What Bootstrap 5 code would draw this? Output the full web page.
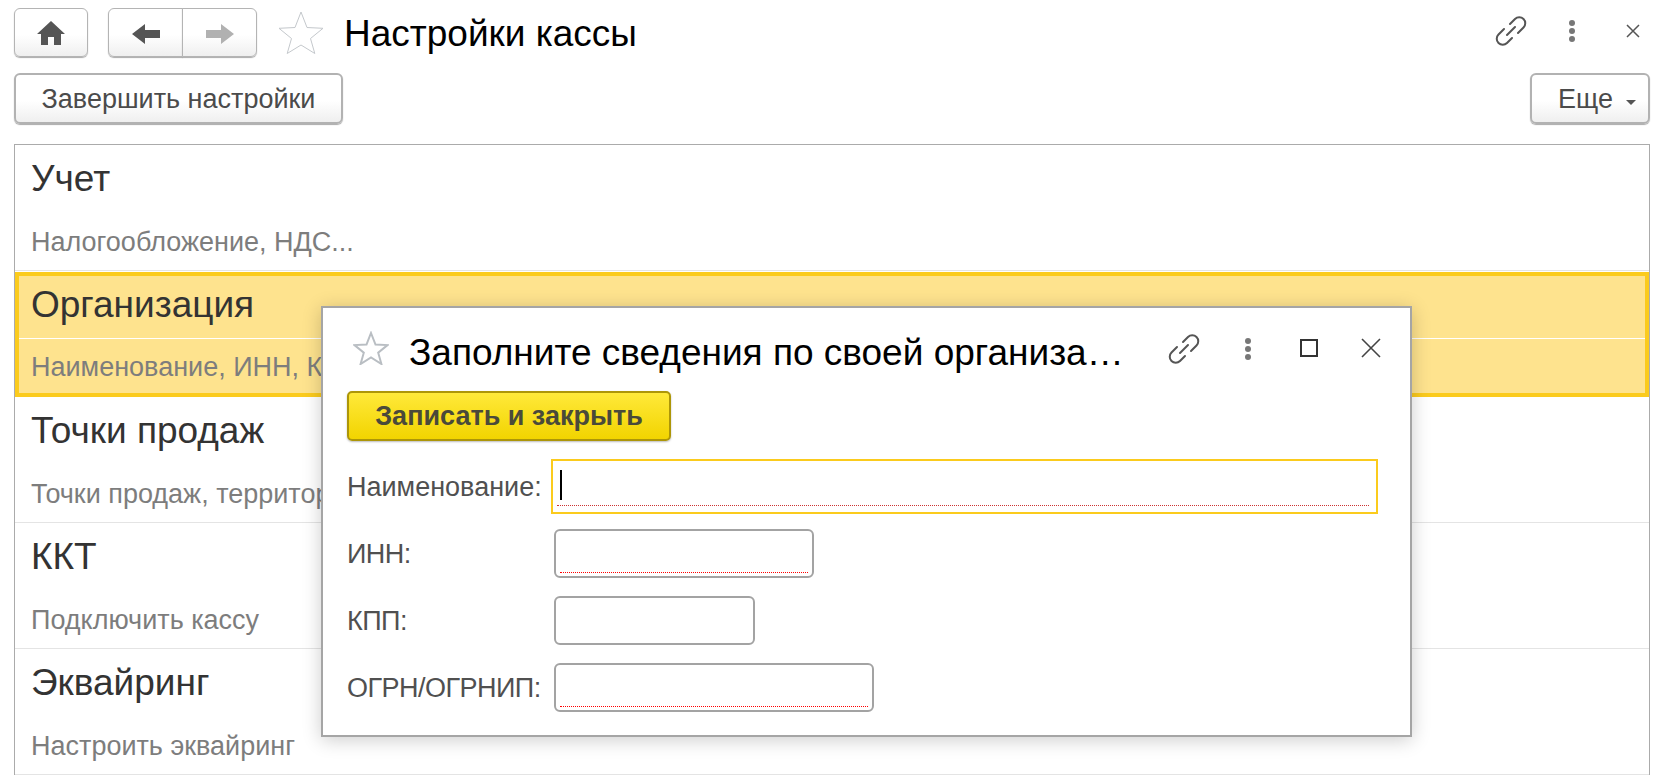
<!DOCTYPE html>
<html lang="ru">
<head>
<meta charset="utf-8">
<title>Настройки кассы</title>
<link href="https://cdn.jsdelivr.net/npm/bootstrap@5.3.0/dist/css/bootstrap.min.css" rel="stylesheet">
<style>
html,body{height:777px;overflow:hidden;background:#fff}
body{font-family:"Liberation Sans",Arial,sans-serif;color:#4a4a4a;position:relative}
.head-bar{height:57px;padding:8px 17px 0 14px}
.tool-bar{height:87px;padding:16px 17px 0 14px}
.one-btn{font-size:27px;line-height:1;color:#4b4b4b;background:linear-gradient(#fff 55%,#efefef);border:1px solid #b4b4b4;border-radius:6px;box-shadow:0 1px 1px #aaa;padding:0}
.one-btn:hover{background:linear-gradient(#fff 55%,#efefef);border-color:#b4b4b4;color:#4b4b4b}
.sq-home{width:74px;height:49px}
.nav-pair{margin-left:20px}
.nav-pair .one-btn{width:75px;height:49px}
.nav-pair .one-btn+.one-btn{margin-left:-1px}
.top-star{width:46px;height:44px;margin-left:21px;margin-top:2px}
.page-title{font-size:37px;line-height:48px;color:#000;margin:2px 0 0 20px;font-weight:400}
.finish-btn{width:329px;height:51px;border-width:2px;border-color:#b2b2b2;padding-top:2px}
.more-btn{width:120px;height:51px;border-width:2px;border-color:#b2b2b2;padding:2px 0 0 14px}
.caret-mark{display:inline-block;width:0;height:0;border:5px solid transparent;border-top-color:#555;border-bottom:0;margin-left:13px;vertical-align:3px}
.set-list{margin:0 17px 0 14px;border:1px solid #ababab;border-bottom:0;border-radius:0}
.set-item{height:126px;padding:0;border:0;border-bottom:1px solid #e4e4e4;background:#fff;border-radius:0!important}
.set-title{height:66px;font-size:37px;line-height:67px;color:#333;padding-left:16px}
.set-sub{height:59px;white-space:nowrap;font-size:27px;line-height:62px;color:#7d7d7d;padding-left:16px}
.set-item.is-active{height:125px;background:#fee38e;border:4px solid #fbcb1d;margin-top:1px;border-bottom-width:4px;box-shadow:0 1px 0 #e4e4e4}
.is-active .set-title{height:63px;line-height:58px;border-bottom:1px solid #fff;padding-left:12px}
.is-active .set-sub{height:54px;line-height:57px;padding-left:12px}
.dlg-win{position:absolute;left:321px;top:306px;width:1091px;height:431px;background:#fff;border:2px solid #a5a5a5;box-shadow:0 3px 18px rgba(0,0,0,.2)}
.dlg-head{height:83px;padding:23px 0 0 30px}
.dlg-title{font-size:37px;line-height:44px;color:#000;margin:0 0 0 20px;font-weight:400;width:742px;white-space:nowrap}
.ico-link{margin-left:17px}
.ico-dots{margin-left:44px}
.ico-sq{margin-left:48px}
.ico-x{margin-left:43px}
.save-btn{display:block;margin-left:24px;width:324px;height:50px;font-size:27px;font-weight:700;color:#4a4a3a;background:linear-gradient(#ffe93a,#f2d400);border:2px solid #ad9608;border-radius:5px;box-shadow:0 1px 2px #bbb;padding:0}
.save-btn:hover{background:linear-gradient(#ffe93a,#f2d400);border-color:#ad9608;color:#4a4a3a}
.form-lines{padding:18px 0 0 24px}
.form-line{height:67px}
.form-line label{width:207px;font-size:27px;line-height:32px;padding-top:9px;color:#505050;white-space:nowrap;letter-spacing:-.02em}
.form-line.line-main label{padding-top:12px;letter-spacing:0}
.fld{display:block;height:49px;border:2px solid #a3a3a3;border-radius:6px;position:relative;background:#fff}
.fld.need::after{content:"";position:absolute;left:4px;right:4px;bottom:3px;border-bottom:1px dotted #f00}
.fld-main{width:827px;height:55px;margin-left:-3px;border:2px solid #fbcb1d;border-radius:0}
.fld.fld-main.need::after{bottom:6px;right:7px;border-bottom-color:#c33}
.text-caret{position:absolute;left:7px;top:9px;width:2px;height:30px;background:#000}
.w-inn{width:260px}.w-kpp{width:201px}.w-ogrn{width:320px}
.line-main{height:70px}
</style>
</head>
<body>
<div class="head-bar d-flex align-items-start">
  <button class="btn one-btn sq-home" aria-label="Начало"><svg width="30" height="26" viewBox="0 0 30 26"><path d="M15 1 1 14h4v11h7v-8h6v8h7V14h4z" fill="#555"/></svg></button>
  <div class="btn-group nav-pair">
    <button class="btn one-btn" aria-label="Назад"><svg width="30" height="22" viewBox="0 0 30 22"><path d="M1 11 14 1v6h15v8H14v6z" fill="#555"/></svg></button>
    <button class="btn one-btn" aria-label="Вперед"><svg width="30" height="22" viewBox="0 0 30 22"><path d="M29 11 16 1v6H1v8h15v6z" fill="#b1b1b1"/></svg></button>
  </div>
  <svg class="top-star" viewBox="0 0 46 44" aria-hidden="true"><path d="M23 2l6 15.500 16 .8-12.500 10.200 4.300 15L23 35l-13.800 8.500 4.300-15L1 18.300l16-.8z" fill="#fff" stroke="#c4c8cc" stroke-width="1"/></svg>
  <h1 class="page-title">Настройки кассы</h1>
  <div class="ms-auto d-flex align-items-center" style="height:46px">
    <svg width="32" height="32" viewBox="0 0 32 32" fill="none" stroke="#555" stroke-width="2" stroke-linecap="round"><path d="M15 9l5-5a6 6 0 0 1 8.500 8.500L23 18M17 23l-5 5a6 6 0 0 1-8.500-8.500L9 14M12 20l8-8"/></svg>
    <svg width="10" height="24" viewBox="0 0 10 24" style="margin-left:40px" fill="#777"><circle cx="5" cy="4" r="3"/><circle cx="5" cy="12" r="3"/><circle cx="5" cy="20" r="3"/></svg>
    <svg width="14" height="14" viewBox="0 0 14 14" style="margin-left:49px;margin-right:10px" stroke="#555" stroke-width="1.500"><path d="M1 1l12 12M13 1 1 13"/></svg>
  </div>
</div>
<div class="tool-bar d-flex justify-content-between align-items-start">
  <button class="btn one-btn finish-btn">Завершить настройки</button>
  <button class="btn one-btn more-btn">Еще<span class="caret-mark"></span></button>
</div>
<div class="list-group set-list">
  <div class="list-group-item set-item"><div class="set-title">Учет</div><div class="set-sub">Налогообложение, НДС...</div></div>
  <div class="list-group-item set-item is-active"><div class="set-title">Организация</div><div class="set-sub">Наименование, ИНН, КПП...</div></div>
  <div class="list-group-item set-item"><div class="set-title">Точки продаж</div><div class="set-sub">Точки продаж, территории...</div></div>
  <div class="list-group-item set-item"><div class="set-title">ККТ</div><div class="set-sub">Подключить кассу</div></div>
  <div class="list-group-item set-item"><div class="set-title">Эквайринг</div><div class="set-sub">Настроить эквайринг</div></div>
</div>
<div class="dlg-win" role="dialog">
  <div class="dlg-head d-flex align-items-start">
    <svg width="36" height="34" viewBox="0 0 36 34"><path d="M18 2l4.500 11.500 12 .6-9.300 7.600 3.200 11.300L18 26.500 7.600 33l3.200-11.300L1.500 14.100l12-.6z" fill="#fff" stroke="#b9bec3" stroke-width="2"/></svg>
    <h2 class="dlg-title">Заполните сведения по своей организа…</h2>
    <svg class="ico-link" width="32" height="32" viewBox="0 0 32 32" fill="none" stroke="#555" stroke-width="2" stroke-linecap="round" style="margin-top:2px"><path d="M15 9l5-5a6 6 0 0 1 8.500 8.500L23 18M17 23l-5 5a6 6 0 0 1-8.500-8.500L9 14M12 20l8-8"/></svg>
    <svg class="ico-dots" width="8" height="24" viewBox="0 0 8 24" fill="#777" style="margin-top:6px"><circle cx="4" cy="4" r="3"/><circle cx="4" cy="12" r="3"/><circle cx="4" cy="20" r="3"/></svg>
    <svg class="ico-sq" width="18" height="18" viewBox="0 0 18 18" fill="none" stroke="#333" stroke-width="2" style="margin-top:8px"><rect x="1" y="1" width="16" height="16"/></svg>
    <svg class="ico-x" width="20" height="20" viewBox="0 0 20 20" stroke="#444" stroke-width="1.600" style="margin-top:7px"><path d="M1 1l18 18M19 1 1 19"/></svg>
  </div>
  <button class="btn save-btn">Записать и закрыть</button>
  <div class="form-lines">
    <div class="form-line line-main d-flex align-items-start"><label>Наименование:</label><span class="fld fld-main need"><span class="text-caret"></span></span></div>
    <div class="form-line d-flex align-items-start"><label>ИНН:</label><span class="fld need w-inn"></span></div>
    <div class="form-line d-flex align-items-start"><label>КПП:</label><span class="fld w-kpp"></span></div>
    <div class="form-line d-flex align-items-start"><label>ОГРН/ОГРНИП:</label><span class="fld need w-ogrn"></span></div>
  </div>
</div>
<script src="https://cdn.jsdelivr.net/npm/bootstrap@5.3.0/dist/js/bootstrap.bundle.min.js"></script>
</body>
</html>
